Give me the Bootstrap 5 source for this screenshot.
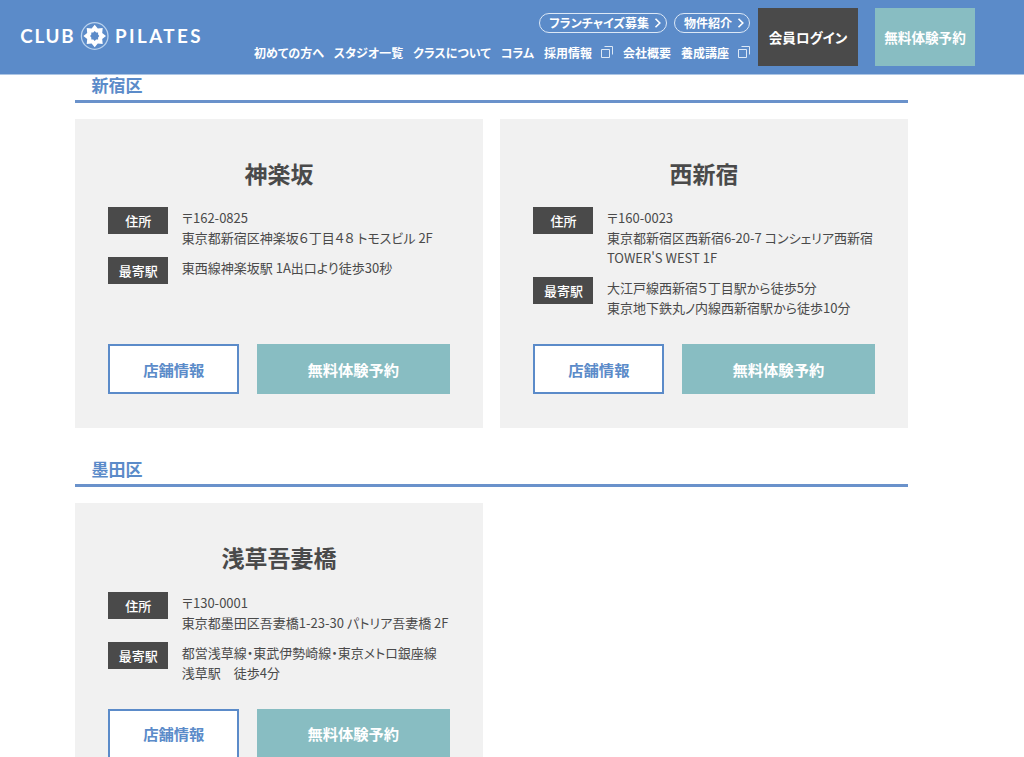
<!DOCTYPE html>
<html lang="ja">
<head>
<meta charset="utf-8">
<meta name="viewport" content="width=device-width, initial-scale=1">
<title>CLUB PILATES</title>
<link href="https://cdn.jsdelivr.net/npm/bootstrap@5.3.0/dist/css/bootstrap.min.css" rel="stylesheet">
<style>
  :root { --brand: #5b8bc9; --mint: #88bdc2; --ink: #4a4a4a; }
  html, body { height: 757px; overflow: hidden; }
  body { font-family: "Noto Sans CJK JP", sans-serif; font-feature-settings: "palt"; color: var(--ink); font-size: 13px; line-height: 20px; }
  .site-header { height: 74px; background: var(--brand); box-shadow: 0 .5px 0 var(--brand); }
  .logo { margin-left: 20px; margin-top: 20px; }
  .logo text { font-family: Lato, sans-serif; font-weight: 700; font-size: 18.8px; fill: #fff; }
  .menus { width: 504px; margin-left: auto; }
  .pills { gap: 7px; padding-top: 13px; }
  .pill { height: 20px; border: 1px solid #dce8f6; color: #fff; font-size: 12px; line-height: 18px; padding: 0 4px 0 9px; font-weight: 700; border-radius: 10px; }
  .pill svg { margin-left: 5px; }
  .gnav { color: #fff; font-size: 12px; font-weight: 700; line-height: 18px; margin-top: 11px; }
  .gnav a, .pill { text-decoration: none; white-space: nowrap; }
  .gnav a { color: #fff; }
  .gnav svg { margin-left: 8px; margin-top: -7px; }
  .head-btn { width: 100px; height: 58px; margin-top: 8px; color: #fff; font-weight: 700; font-size: 13.6px; text-decoration: none; }
  .head-trial { margin-left: 17px; margin-right: 49px; }
  .bg-ink { background: #4a4a4a; }
  .bg-mint { background: var(--mint); }
  .areas { width: 833px; margin-left: 75px; }
  .area-title { height: 29px; border-bottom: 3px solid #6a92cb; color: var(--brand); font-size: 17px; font-weight: 700; line-height: 22.4px; padding-left: 16.5px; margin: 0 0 16px; }
  .area + .area { margin-top: 30.8px; }
  .studios { gap: 17.3px; }
  .studio { width: 407.8px; background: #f1f1f1; padding: 36.5px 33.3px 33.3px; }
  .studio h3 { font-size: 23px; line-height: 34px; font-weight: 700; margin: 0 0 17.9px; text-align: center; }
  .tag { width: 60px; height: 27px; line-height: 27px; background: #4a4a4a; color: #fff; font-weight: 500; text-align: center; margin-right: 13.5px; }
  .info { margin-bottom: 10px; }
  .info dd { margin: 0; padding-top: 1px; margin-bottom: -1px; white-space: nowrap; }
  .info dt { margin-bottom: -7px; }
  .actions { gap: 17.8px; padding-top: 16.9px; }
  .actions a { height: 50px; font-size: 15.3px; font-weight: 700; text-decoration: none; padding-bottom: 1px; }
  .shop { width: 131px; border: 2px solid var(--brand); background: #fff; color: var(--brand); }
  .trial { width: 192.5px; background: var(--mint); color: #fff; }
</style>
</head>
<body class="bg-white">
<header class="site-header d-flex align-items-start">
  <svg class="logo flex-shrink-0" width="184" height="32" viewBox="20 20 184 32" aria-label="CLUB PILATES">
    <text x="20.3" y="42.8" textLength="53.2">CLUB</text>
    <text x="115" y="42.8" textLength="85.6">PILATES</text>
    <circle cx="94.7" cy="36" r="13.3" fill="none" stroke="#b9d2ee" stroke-width="1.3"/>
    <g transform="translate(94.7 36)">
      <path fill="#fff" fill-rule="evenodd" d="M0-11.3 3.1-7.5 8-8 7.5-3.1 11.3 0 7.5 3.1 8 8 3.1 7.5 0 11.3-3.1 7.5-8 8-7.5 3.1-11.3 0-7.5-3.1-8-8-3.1-7.5Z M0-5 1.4-3.4 3.4-3.4 3.4-1.4 4.6 0 3.4 1.4 3.4 3.4 1.4 3.4 0 5-1.4 3.4-3.4 3.4-3.4 1.4-4.6 0-3.4-1.4-3.4-3.4-1.4-3.4Z"/>
    </g>
  </svg>
  <div class="menus">
    <div class="pills d-flex justify-content-end pe-2">
      <a class="pill d-flex align-items-center"><span>フランチャイズ募集</span><svg width="8" height="10" viewBox="0 0 8 10"><path d="M1.5.8 5.8 5 1.5 9.2" fill="none" stroke="#fff" stroke-width="1.6"/></svg></a>
      <a class="pill d-flex align-items-center"><span>物件紹介</span><svg width="8" height="10" viewBox="0 0 8 10"><path d="M1.5.8 5.8 5 1.5 9.2" fill="none" stroke="#fff" stroke-width="1.6"/></svg></a>
    </div>
    <nav class="gnav d-flex justify-content-between pe-2">
      <a>初めての方へ</a><a>スタジオ一覧</a><a>クラスについて</a><a>コラム</a>
      <a>採用情報<svg width="13" height="13" viewBox="0 0 13 13"><path d="M1.5 4.5h8v8h-8zM4.5 1.5h8v8" fill="none" stroke="#dce8f6"/></svg></a>
      <a>会社概要</a>
      <a>養成講座<svg width="13" height="13" viewBox="0 0 13 13"><path d="M1.5 4.5h8v8h-8zM4.5 1.5h8v8" fill="none" stroke="#dce8f6"/></svg></a>
    </nav>
  </div>
  <a class="head-btn bg-ink d-flex align-items-center justify-content-center flex-shrink-0">会員ログイン</a>
  <a class="head-btn head-trial bg-mint d-flex align-items-center justify-content-center flex-shrink-0">無料体験予約</a>
</header>
<main class="areas">
  <section class="area">
    <h2 class="area-title">新宿区</h2>
    <div class="studios d-flex">
      <article class="studio d-flex flex-column">
        <h3>神楽坂</h3>
        <dl class="m-0">
          <div class="info d-flex align-items-start"><dt class="tag">住所</dt><dd>〒162-0825<br>東京都新宿区神楽坂６丁目４８ トモスビル 2F</dd></div>
          <div class="info d-flex align-items-start"><dt class="tag">最寄駅</dt><dd>東西線神楽坂駅 1A出口より徒歩30秒</dd></div>
        </dl>
        <div class="actions d-flex mt-auto">
          <a class="shop d-flex align-items-center justify-content-center">店舗情報</a><a class="trial d-flex align-items-center justify-content-center">無料体験予約</a>
        </div>
      </article>
      <article class="studio d-flex flex-column">
        <h3>西新宿</h3>
        <dl class="m-0">
          <div class="info d-flex align-items-start"><dt class="tag">住所</dt><dd>〒160-0023<br>東京都新宿区西新宿6-20-7 コンシェリア西新宿<br>TOWER'S WEST 1F</dd></div>
          <div class="info d-flex align-items-start"><dt class="tag">最寄駅</dt><dd>大江戸線西新宿５丁目駅から徒歩5分<br>東京地下鉄丸ノ内線西新宿駅から徒歩10分</dd></div>
        </dl>
        <div class="actions d-flex mt-auto">
          <a class="shop d-flex align-items-center justify-content-center">店舗情報</a><a class="trial d-flex align-items-center justify-content-center">無料体験予約</a>
        </div>
      </article>
    </div>
  </section>
  <section class="area">
    <h2 class="area-title">墨田区</h2>
    <div class="studios d-flex">
      <article class="studio d-flex flex-column">
        <h3>浅草吾妻橋</h3>
        <dl class="m-0">
          <div class="info d-flex align-items-start"><dt class="tag">住所</dt><dd>〒130-0001<br>東京都墨田区吾妻橋1-23-30 パトリア吾妻橋 2F</dd></div>
          <div class="info d-flex align-items-start"><dt class="tag">最寄駅</dt><dd>都営浅草線・東武伊勢崎線・東京メトロ銀座線<br>浅草駅　徒歩4分</dd></div>
        </dl>
        <div class="actions d-flex mt-auto">
          <a class="shop d-flex align-items-center justify-content-center">店舗情報</a><a class="trial d-flex align-items-center justify-content-center">無料体験予約</a>
        </div>
      </article>
    </div>
  </section>
</main>
<script src="https://cdn.jsdelivr.net/npm/bootstrap@5.3.0/dist/js/bootstrap.bundle.min.js"></script>
</body>
</html>
